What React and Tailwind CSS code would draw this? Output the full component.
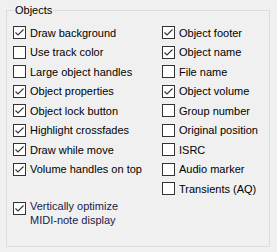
const left = [
  ['Draw background', true],
  ['Use track color', false],
  ['Large object handles', false],
  ['Object properties', true],
  ['Object lock button', true],
  ['Highlight crossfades', true],
  ['Draw while move', true],
  ['Volume handles on top', true],
];

const right = [
  ['Object footer', true],
  ['Object name', true],
  ['File name', false],
  ['Object volume', true],
  ['Group number', false],
  ['Original position', false],
  ['ISRC', false],
  ['Audio marker', false],
  ['Transients (AQ)', false],
];

function Box({ checked }) {
  return (
    <span className="flex h-[13px] w-[13px] shrink-0 items-center justify-center border border-[#333333] bg-white">
      {checked && (
        <svg width="11" height="11" viewBox="0 0 11 11" fill="none">
          <path d="M1.5 5.5 L4 8 L9.5 2.5" stroke="#333333" strokeWidth="1.1" />
        </svg>
      )}
    </span>
  );
}

function Row({ label, checked }) {
  return (
    <div className="flex h-[19.5px] items-center gap-[4px]">
      <Box checked={checked} />
      <span className="whitespace-nowrap">{label}</span>
    </div>
  );
}

export default function App() {
  return (
    <div className="h-[252px] w-[277px] bg-[#f0f0f0] pt-[3px] text-[11px] leading-[14px] text-black" style={{ fontFamily: '"Liberation Sans", Arial, sans-serif' }}>
      <fieldset className="ml-[6px] h-[244px] w-[264px] border border-[#dcdcdc]">
        <legend className="ml-[7px] px-[1px]">Objects</legend>
        <div className="flex pl-[6px] pt-[6px]">
          <div className="flex w-[149px] flex-col">
            {left.map(([l, c]) => (
              <Row key={l} label={l} checked={c} />
            ))}
            <div className="mt-[20px] flex items-start gap-[4px]">
              <span className="mt-[3px]">
                <Box checked />
              </span>
              <span className="text-[#1a1a4a]">
                Vertically optimize
                <br />
                MIDI-note display
              </span>
            </div>
          </div>
          <div className="flex flex-col">
            {right.map(([l, c]) => (
              <Row key={l} label={l} checked={c} />
            ))}
          </div>
        </div>
      </fieldset>
    </div>
  );
}
